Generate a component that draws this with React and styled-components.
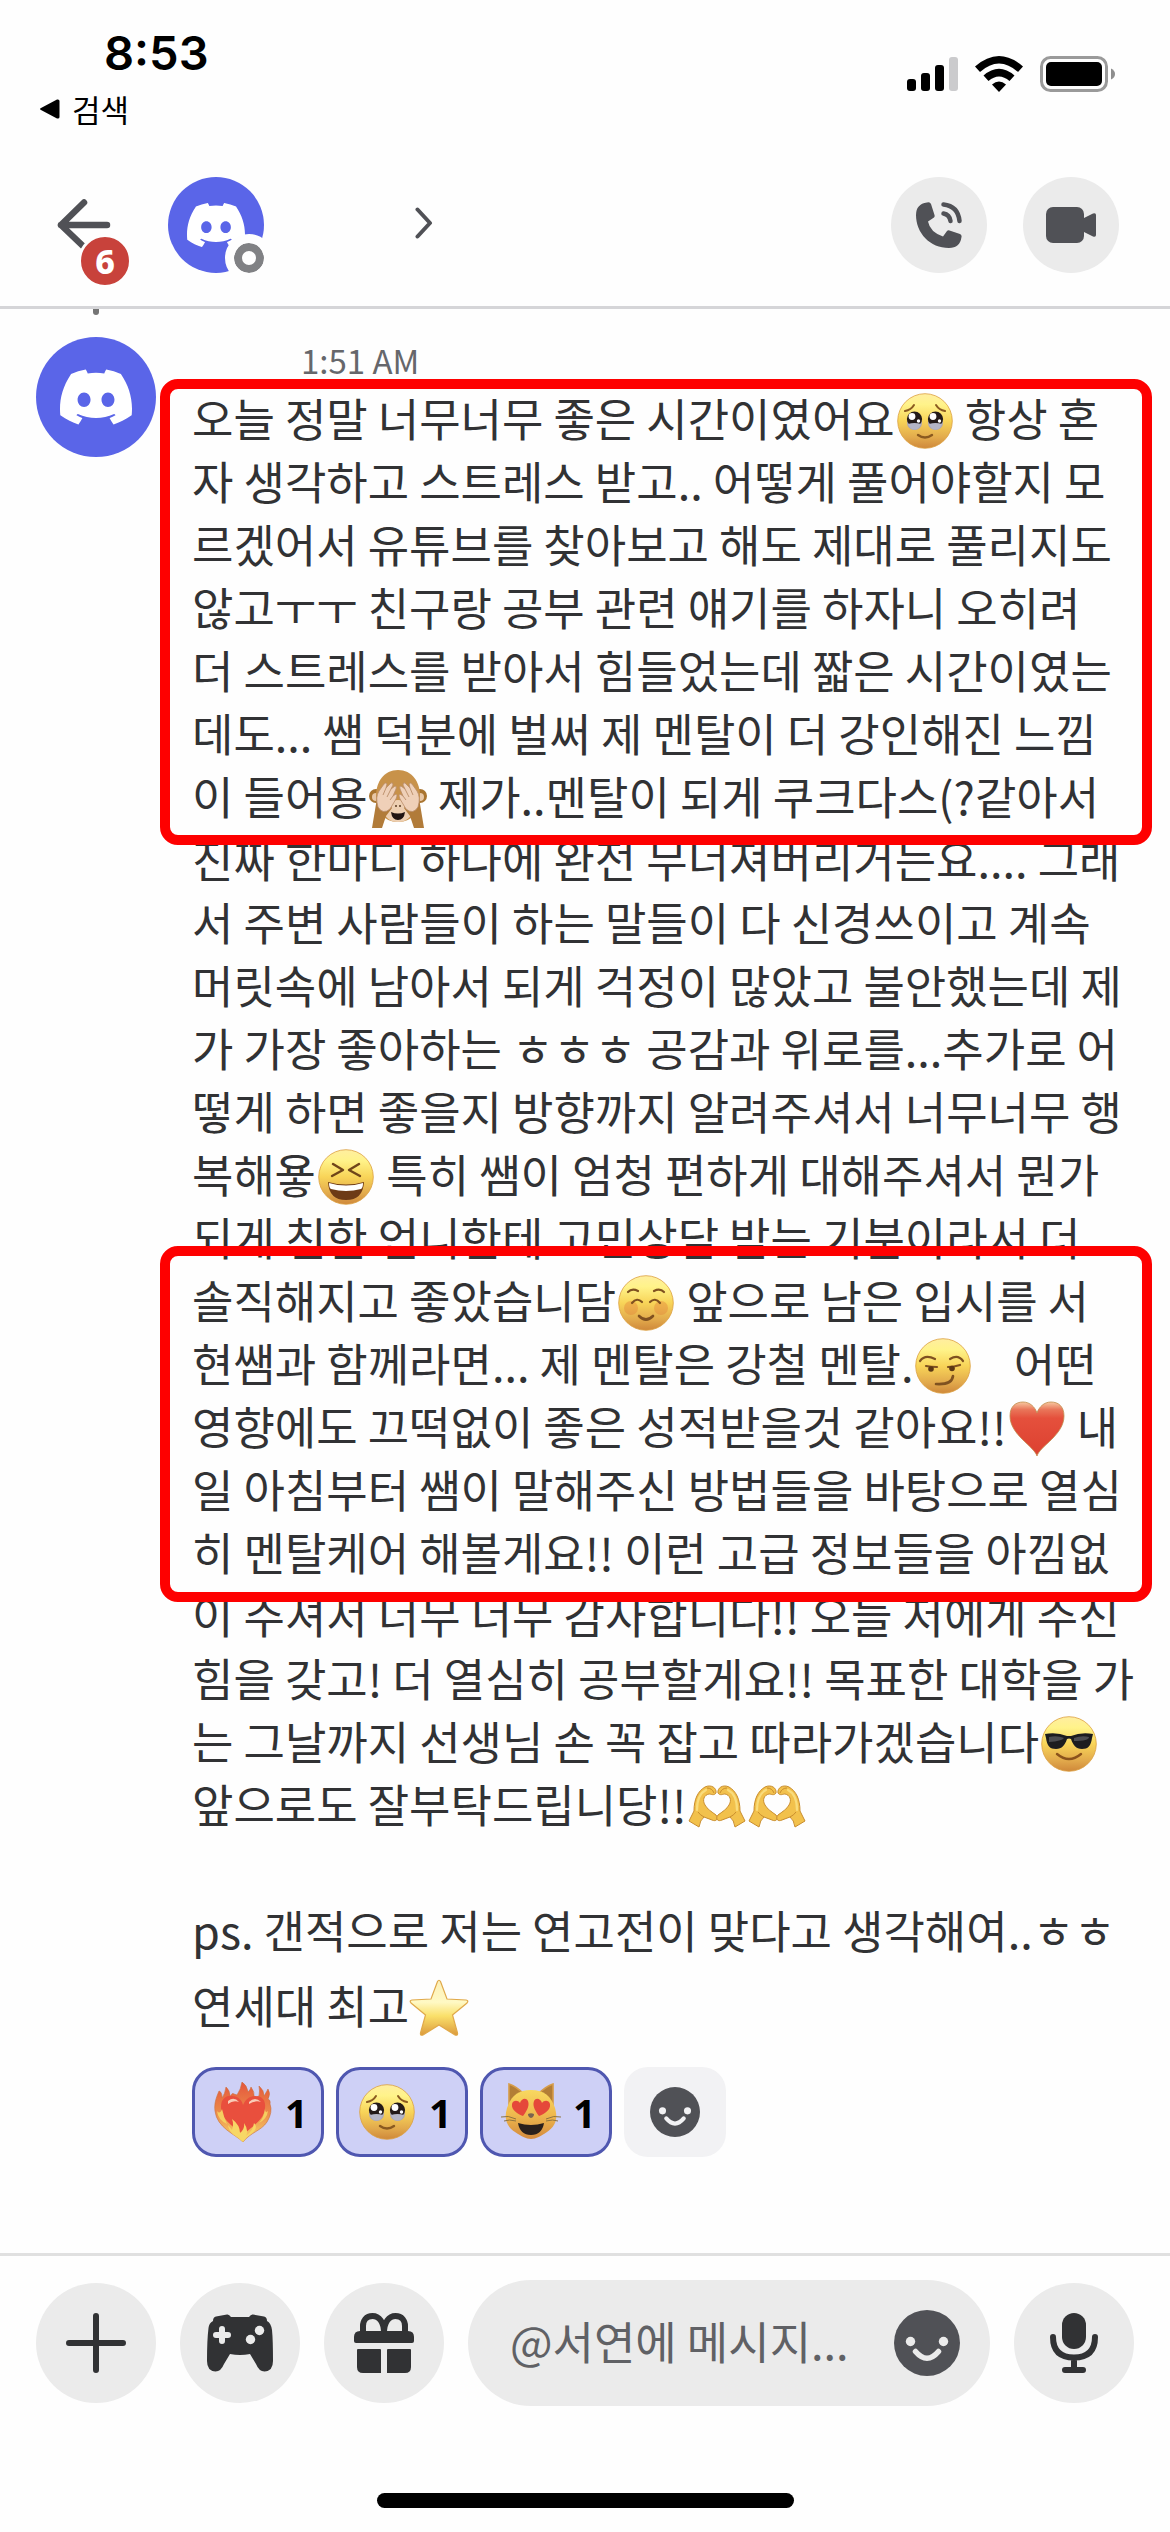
import React, { useState } from 'react'
import styled, { createGlobalStyle } from 'styled-components'
import { SiDiscord } from 'react-icons/si'

const message = [
  '오늘 정말 너무너무 좋은 시간이였어요🥹 항상 혼',
  '자 생각하고 스트레스 받고.. 어떻게 풀어야할지 모',
  '르겠어서 유튜브를 찾아보고 해도 제대로 풀리지도',
  '않고ㅜㅜ 친구랑 공부 관련 얘기를 하자니 오히려',
  '더 스트레스를 받아서 힘들었는데 짧은 시간이였는',
  '데도... 쌤 덕분에 벌써 제 멘탈이 더 강인해진 느낌',
  '이 들어용🙈 제가..멘탈이 되게 쿠크다스(?같아서',
  '진짜 한마디 하나에 완전 무너져버리거든요.... 그래',
  '서 주변 사람들이 하는 말들이 다 신경쓰이고 계속',
  '머릿속에 남아서 되게 걱정이 많았고 불안했는데 제',
  '가 가장 좋아하는 ㅎㅎㅎ 공감과 위로를...추가로 어',
  '떻게 하면 좋을지 방향까지 알려주셔서 너무너무 행',
  '복해욯😆 특히 쌤이 엄청 편하게 대해주셔서 뭔가',
  '되게 친한 언니한테 고민상담 받는 기분이라서 더',
  '솔직해지고 좋았습니담😊 앞으로 남은 입시를 서',
  '현쌤과 함께라면... 제 멘탈은 강철 멘탈.😏\u00a0\u00a0\u00a0 어떤',
  '영향에도 끄떡없이 좋은 성적받을것 같아요!!❤ 내',
  '일 아침부터 쌤이 말해주신 방법들을 바탕으로 열심',
  '히 멘탈케어 해볼게요!! 이런 고급 정보들을 아낌없',
  '이 주셔서 너무 너무 감사합니다!! 오늘 저에게 주신',
  '힘을 갖고! 더 열심히 공부할게요!! 목표한 대학을 가',
  '는 그날까지 선생님 손 꼭 잡고 따라가겠습니다😎',
  '앞으로도 잘부탁드립니당!!🫶🫶',
  '',
  'ps. 갠적으로 저는 연고전이 맞다고 생각해여..ㅎㅎ',
]

const lastLine = '연세대 최고⭐'

const highlights = [
  { top: -7, height: 466 },
  { top: 860, height: 356 },
]

const heartPath =
  'M30 57C27 47 3 36 3 17C3 7 9 3 16 3C23 3 28 8 30 14C32 8 37 3 44 3C51 3 57 7 57 17C57 36 33 47 30 57Z'

function Gradients() {
  return (
    <HiddenSvg aria-hidden="true">
      <defs>
        <linearGradient id="face" x1="0" y1="0" x2="0" y2="1">
          <stop offset="0" stopColor="#ffeea0" />
          <stop offset="0.2" stopColor="#fff38a" />
          <stop offset="0.5" stopColor="#f8d458" />
          <stop offset="0.8" stopColor="#e2aa4c" />
          <stop offset="1" stopColor="#cf883a" />
        </linearGradient>
        <linearGradient id="heart" x1="0" y1="0" x2="0" y2="1">
          <stop offset="0" stopColor="#f7c9a0" />
          <stop offset="0.14" stopColor="#e9765a" />
          <stop offset="0.3" stopColor="#e5503c" />
          <stop offset="1" stopColor="#dc4030" />
        </linearGradient>
        <linearGradient id="star" x1="0" y1="0" x2="0" y2="1">
          <stop offset="0" stopColor="#fdf0b8" />
          <stop offset="0.4" stopColor="#fff9c4" />
          <stop offset="0.65" stopColor="#fae06a" />
          <stop offset="1" stopColor="#dc9a3c" />
        </linearGradient>
        <linearGradient id="fire" x1="0" y1="0" x2="0" y2="1">
          <stop offset="0" stopColor="#e5553c" />
          <stop offset="0.5" stopColor="#ec8a4a" />
          <stop offset="1" stopColor="#f8d868" />
        </linearGradient>
        <linearGradient id="cat" x1="0" y1="0" x2="0" y2="1">
          <stop offset="0" stopColor="#f8d860" />
          <stop offset="0.5" stopColor="#efb94e" />
          <stop offset="1" stopColor="#d48a3e" />
        </linearGradient>
      </defs>
    </HiddenSvg>
  )
}

function Face({ children }) {
  return (
    <>
      <circle cx="30" cy="30" r="27.3" fill="url(#face)" stroke="#dca040" strokeWidth="0.8" />
      {children}
    </>
  )
}

const drawings = {
  '🥹': {
    label: '울음을 참는 얼굴',
    art: (
      <Face>
        <g fill="none" stroke="#8a5a20" strokeWidth="2" strokeLinecap="round">
          <path d="M10 20Q16 19 19 14" />
          <path d="M50 20Q44 19 41 14" />
          <path d="M23 44Q30 49 37 44" strokeWidth="2.4" />
        </g>
        <ellipse cx="19.5" cy="32" rx="7.5" ry="7" fill="#a9a6b8" />
        <ellipse cx="40.5" cy="32" rx="7.5" ry="7" fill="#a9a6b8" />
        <circle cx="19.5" cy="28" r="7.6" fill="#231a18" />
        <circle cx="40.5" cy="28" r="7.6" fill="#231a18" />
        <path d="M13 33Q19.500 31 26 33Q24 38.500 19.500 38.500Q15 38.500 13 33Z" fill="#b4b5c6" />
        <path d="M34 33Q40.500 31 47 33Q45 38.500 40.500 38.500Q36 38.500 34 33Z" fill="#b4b5c6" />
        <circle cx="17" cy="25.5" r="3.4" fill="#fff" />
        <circle cx="38" cy="25.5" r="3.4" fill="#fff" />
        <circle cx="23.5" cy="30" r="1.7" fill="#fff" />
        <circle cx="44.5" cy="30" r="1.7" fill="#fff" />
      </Face>
    ),
  },
  '🙈': {
    label: '눈을 가린 원숭이',
    art: (
      <>
        <circle cx="8" cy="27" r="7" fill="#a9742f" />
        <circle cx="52" cy="27" r="7" fill="#a9742f" />
        <circle cx="8" cy="28" r="4" fill="#e8c7a6" />
        <circle cx="52" cy="28" r="4" fill="#e8c7a6" />
        <path d="M30 1C44 1 52 13 52 27C52 41 45 53 30 53C15 53 8 41 8 27C8 13 16 1 30 1Z" fill="#c8924a" />
        <ellipse cx="30" cy="42" rx="14" ry="11" fill="#edcfb2" />
        <path d="M23 43Q30 46 37 43Q36 51 30 51Q24 51 23 43Z" fill="#201412" />
        <circle cx="28" cy="37" r="1" fill="#5a3a20" />
        <circle cx="32" cy="37" r="1" fill="#5a3a20" />
        <path d="M9 29L4 59H14L18 47L24 39L14 26Z" fill="#b17b39" />
        <path d="M51 29L56 59H46L42 47L36 39L46 26Z" fill="#b17b39" />
        <path
          d="M10 38Q7 28 11 22L16 15Q18 13 19 15L18 19L23 14Q25 13 25 16L23 20L27 17Q29 17 28 20L25 27L28 25Q30 26 28 30L22 40Q15 46 10 38Z"
          fill="#efd0b8"
          stroke="#b98c68"
          strokeWidth="0.8"
        />
        <path
          d="M50 38Q53 28 49 22L44 15Q42 13 41 15L42 19L37 14Q35 13 35 16L37 20L33 17Q31 17 32 20L35 27L32 25Q30 26 32 30L38 40Q45 46 50 38Z"
          fill="#efd0b8"
          stroke="#b98c68"
          strokeWidth="0.8"
        />
        <g stroke="#b98c68" strokeWidth="0.9" fill="none">
          <path d="M18 19L15 26M23 20L19 28M25 27L22 31" />
          <path d="M42 19L45 26M37 20L41 28M35 27L38 31" />
        </g>
      </>
    ),
  },
  '😆': {
    label: '눈을 감고 활짝 웃는 얼굴',
    art: (
      <Face>
        <g fill="none" stroke="#6f4519" strokeWidth="2.4" strokeLinecap="round" strokeLinejoin="round">
          <path d="M17 17L27 23L16 29" />
          <path d="M43 17L33 23L44 29" />
        </g>
        <path d="M12 35Q30 40 48 35Q47 53 30 53Q13 53 12 35Z" fill="#6d3a16" />
        <path d="M13 36Q30 41 47 36Q47 41 45 42Q30 46 15 42Q13 41 13 36Z" fill="#fff" />
      </Face>
    ),
  },
  '😊': {
    label: '미소 짓는 얼굴',
    art: (
      <Face>
        <circle cx="15" cy="35" r="7" fill="#e0803a" opacity="0.4" />
        <circle cx="45" cy="35" r="7" fill="#e0803a" opacity="0.4" />
        <g fill="none" stroke="#7f5120" strokeWidth="2.2" strokeLinecap="round">
          <path d="M12 19Q16 15 22 18" />
          <path d="M48 19Q44 15 38 18" />
          <path d="M16 30Q21 24 26 29" />
          <path d="M44 30Q39 24 34 29" />
          <path d="M23 43Q30 50 37 43" strokeWidth="2.6" />
        </g>
      </Face>
    ),
  },
  '😏': {
    label: '능글맞게 웃는 얼굴',
    art: (
      <Face>
        <g fill="none" stroke="#7f5120" strokeWidth="2.2" strokeLinecap="round">
          <path d="M7 25Q12 18 22 23" />
          <path d="M50 25Q45 18 37 23" />
          <path d="M13 30Q18 31 24 31" />
          <path d="M35 31Q41 31 47 29" />
          <path d="M23 48Q39 49 40 40" strokeWidth="2.6" />
        </g>
        <circle cx="18" cy="33" r="2.8" fill="#5a3714" />
        <circle cx="39" cy="32.5" r="2.8" fill="#5a3714" />
      </Face>
    ),
  },
  '❤': {
    label: '빨간 하트',
    art: <path d={heartPath} fill="url(#heart)" stroke="#c08a4a" strokeWidth="0.8" />,
  },
  '😎': {
    label: '선글라스를 낀 얼굴',
    art: (
      <Face>
        <path
          d="M6 20Q18 18 28 22H32Q42 18 54 20L53 24C52 32 49 35 43 35C37 35 34 31 32 25Q30 24 28 25C26 31 23 35 17 35C11 35 8 32 7 24Z"
          fill="#1c1c1f"
        />
        <path d="M10 23Q18 21 25 24Q23 27 10 28Z" fill="#4b4c50" />
        <path d="M35 24Q43 21 50 23Q50 27 35 27Z" fill="#4b4c50" />
        <path d="M18 40Q30 50 42 40" fill="none" stroke="#8a521c" strokeWidth="2.4" strokeLinecap="round" />
      </Face>
    ),
  },
  '🫶': {
    label: '하트 모양 손',
    art: (
      <>
        <g fill="#f2c14c" stroke="#c98d2e" strokeWidth="1" strokeLinejoin="round">
          <path d="M12 50L2 44L7 34C7 22 11 14 18 10C24 7 30 11 29 16C27 19 24 17 22 17C17 18 15 23 18 28C20 32 25 35 29 38C32 42 29 45 25 43L17 40Q13 43 12 50Z" />
          <path d="M48 50L58 44L53 34C53 22 49 14 42 10C36 7 30 11 31 16C33 19 36 17 38 17C43 18 45 23 42 28C40 32 35 35 31 38C28 42 31 45 35 43L43 40Q47 43 48 50Z" />
        </g>
        <g fill="none" stroke="#f9dc7c" strokeWidth="2.2" strokeLinecap="round">
          <path d="M10 33C10 24 13 16 19 13" />
          <path d="M50 33C50 24 47 16 41 13" />
        </g>
        <g fill="none" stroke="#c98d2e" strokeWidth="1">
          <path d="M20 11Q25 11 27 16M11 35Q13 38 17 40" />
          <path d="M40 11Q35 11 33 16M49 35Q47 38 43 40" />
        </g>
      </>
    ),
  },
  '⭐': {
    label: '별',
    art: (
      <path
        d="M28.5 3.5Q30 1 31.500 3.500L38 21L57 22Q60 22.500 58 25L43.500 37L48.500 55Q49 58 46 57L30 47L14 57Q11 58 11.500 55L16.500 37L2 25Q0 22.500 3 22L22 21Z"
        fill="url(#star)"
        stroke="#e0a94a"
        strokeWidth="1.2"
      />
    ),
  },
  '🔥': {
    label: '불타는 하트',
    art: (
      <>
        <path
          d="M30 60C22 52 4 46 2 29C1 22 3 16 6 9C9 10 9 14 9 16Q12 12 13 5Q17 8 17 15Q19 10 21 12L24 13Q28 7 29 0Q34 3 35 10Q38 7 38 5Q42 10 41 16L46 14Q47 9 46 4Q51 8 51 14Q54 9 55 7Q58 12 55 17Q58 18 57 22Q60 30 54 40C48 49 38 50 30 60Z"
          fill="url(#fire)"
          stroke="#c9713c"
          strokeWidth="0.6"
        />
        <path
          d="M30 54C26 47 8 40 8 25C8 17 13 13 19 14C25 14 29 18 30 23C32 18 36 14 42 14C49 14 53 18 52 26C51 40 35 46 30 54Z"
          fill="#e94f3d"
        />
        <path d="M15 19Q21 14 26 20Q20 18 15 22ZM36 20Q42 14 48 20Q42 18 36 22Z" fill="#f9cbb6" />
        <path
          d="M30 60C24 54 16 52 15 43L19 48Q21 42 19 37Q27 43 27 51Q32 47 31 41Q36 48 33 54Q40 49 41 41Q46 46 38 52Q33 55 30 60Z"
          fill="#f7d765"
        />
        <path d="M4 29Q7 33 9 27Q11 36 14 42Q5 38 4 29ZM55 29Q52 32 52 27Q51 35 46 41Q54 37 55 29Z" fill="#f5cf60" />
      </>
    ),
  },
  '😻': {
    label: '하트 눈 고양이',
    art: (
      <>
        <path d="M8 26L8 2Q15 4 24 13ZM52 26L52 2Q45 4 36 13Z" fill="#b27d36" stroke="#d69c48" strokeWidth="1.6" />
        <path
          d="M30 8C43 8 50 14 54 26C57 36 55 44 46 50C40 54 35 57 30 57C25 57 20 54 14 50C5 44 3 36 6 26C10 14 17 8 30 8Z"
          fill="url(#cat)"
        />
        <path d="M22 34C17 32 10 28 11 22C12 18 17 18 19 21C20 17 25 15 27 19C29 24 25 30 22 34Z" fill="#e5483a" />
        <path d="M38 34C43 32 50 28 49 22C48 18 43 18 41 21C40 17 35 15 33 19C31 24 35 30 38 34Z" fill="#e5483a" />
        <path d="M27 32Q30 30.500 33 32Q33 35 30 36Q27 35 27 32Z" fill="#7a6350" />
        <path d="M17 41Q30 45 43 41Q41 53 30 53Q19 53 17 41Z" fill="#2a201c" />
        <g stroke="#8f7440" strokeWidth="1" fill="none">
          <path d="M15 37Q7 33 0 35M15 39Q8 37 3 39" />
          <path d="M45 37Q53 33 60 35M45 39Q52 37 57 39" />
        </g>
      </>
    ),
  },
}

function Emoji({ char }) {
  const { label, art } = drawings[char]
  return (
    <EmojiSvg viewBox="0 0 60 60" role="img" aria-label={label}>
      {art}
    </EmojiSvg>
  )
}

// splits a line into plain strings and drawn emoji
function RichText({ text }) {
  return Array.from(text).reduce((parts, char, index) => {
    if (drawings[char]) {
      parts.push(<Emoji key={index} char={char} />)
    } else if (typeof parts[parts.length - 1] === 'string') {
      parts[parts.length - 1] += char
    } else {
      parts.push(char)
    }
    return parts
  }, [])
}

function SmileyIcon({ size, hole }) {
  return (
    <svg width={size} height={size} viewBox="0 0 66 66" aria-hidden="true">
      <circle cx="33" cy="33" r="33" fill="#505156" />
      <circle cx="16.5" cy="31.5" r="4.7" fill={hole} />
      <circle cx="49.5" cy="31.5" r="4.7" fill={hole} />
      <path d="M21.500 41.500Q33 55 44.500 41.500" fill="none" stroke={hole} strokeWidth="5.5" strokeLinecap="round" />
    </svg>
  )
}

function StatusBar() {
  return (
    <StatusRow>
      <div>
        <Clock>8:53</Clock>
        <BackToSearch href="#search">
          <svg width="21" height="22" viewBox="0 0 21 22" aria-hidden="true">
            <path d="M18 1.500L2 10Q0 11 2 12L18 20.500Q20.500 21 20.500 19V3Q20.500 1 18 1.500Z" />
          </svg>
          검색
        </BackToSearch>
      </div>
      <StatusIcons>
        <svg width="51" height="34" viewBox="0 0 51 34" aria-hidden="true">
          <rect y="22" width="9" height="12" rx="3" />
          <rect x="14" y="16" width="9" height="18" rx="3" />
          <rect x="28" y="8" width="9" height="26" rx="3" />
          <rect x="42" width="9" height="34" rx="3" fill="#cbcbcd" />
        </svg>
        <svg width="48" height="36" viewBox="0 0 48 36" aria-hidden="true">
          <path d="M0 10.500Q24-10.500 48 10.500L43 16Q24-1 5 16Z" />
          <path d="M8.500 19.500Q24 6 39.500 19.500L34.500 25Q24 16 13.500 25Z" />
          <path d="M17 28.500Q24 22.500 31 28.500L24 36Z" />
        </svg>
        <svg width="76" height="36" viewBox="0 0 76 36" aria-hidden="true">
          <rect x="1.5" y="1.5" width="65" height="33" rx="9" fill="none" stroke="#9a9a9a" strokeWidth="3" />
          <rect x="6" y="6" width="56" height="24" rx="5" />
          <path d="M71 12.500Q75 14.500 75 18T71 23.500Z" fill="#8e8e8e" />
        </svg>
      </StatusIcons>
    </StatusRow>
  )
}

function Header() {
  return (
    <HeaderBar>
      <BackButton aria-label="뒤로">
        <svg width="54" height="52" viewBox="0 0 54 52" aria-hidden="true">
          <path
            d="M27 3.500L4 26L27 48M4 26H50"
            fill="none"
            stroke="#505156"
            strokeWidth="6.5"
            strokeLinecap="round"
            strokeLinejoin="round"
          />
        </svg>
        <Badge>6</Badge>
      </BackButton>
      <Avatar $size={96}>
        <SiDiscord size={58} />
        <Presence />
      </Avatar>
      <ProfileButton aria-label="프로필">
        <svg width="18" height="32" viewBox="0 0 18 32" aria-hidden="true">
          <path
            d="M2.500 2.500L15 16L2.500 29.500"
            fill="none"
            stroke="#505156"
            strokeWidth="4"
            strokeLinecap="round"
            strokeLinejoin="round"
          />
        </svg>
      </ProfileButton>
      <CallButtons>
        <RoundButton $size={96} aria-label="음성 통화">
          <svg width="46" height="46" viewBox="0 0 46 46" aria-hidden="true">
            <path
              d="M11 0.500Q14-0.500 15 2L18.500 13Q19 14.500 18 15.500L12 19.500Q14 30 27 34.500L31 29Q32 28 33.500 28.500L44 32Q46 33 45.500 35Q44 46 33 46C14 46 0 31 0 13Q0 2 11 0.500Z"
              fill="#505156"
            />
            <path
              d="M27.500 2.500Q42 4 43.500 19M27.500 11.500Q33.500 12.500 34.500 19"
              fill="none"
              stroke="#505156"
              strokeWidth="4.5"
              strokeLinecap="round"
            />
          </svg>
        </RoundButton>
        <RoundButton $size={96} aria-label="영상 통화">
          <svg width="50" height="36" viewBox="0 0 50 36" aria-hidden="true" fill="#505156">
            <rect width="38" height="36" rx="7" />
            <path d="M36 12L47 6.500Q50 5.500 50 8V28Q50 30.500 47 29.500L36 24Z" />
          </svg>
        </RoundButton>
      </CallButtons>
    </HeaderBar>
  )
}

function Reactions() {
  const [active, setActive] = useState({ '🔥': true, '🥹': true, '😻': true })
  const toggle = (char) => setActive({ ...active, [char]: !active[char] })
  return (
    <ReactionRow>
      {Object.keys(active).map((char) => (
        <Reaction key={char} $active={active[char]} aria-pressed={active[char]} onClick={() => toggle(char)}>
          <Emoji char={char} />
          <span>{active[char] ? 1 : 0}</span>
        </Reaction>
      ))}
      <AddReaction aria-label="반응 추가하기">
        <SmileyIcon size={50} hole="#f2f2f4" />
      </AddReaction>
    </ReactionRow>
  )
}

function Composer() {
  const [draft, setDraft] = useState('')
  return (
    <ComposerBar>
      <RoundButton $size={120} aria-label="첨부">
        <svg width="60" height="60" viewBox="0 0 60 60" aria-hidden="true">
          <path d="M30 3V57M3 30H57" stroke="#313234" strokeWidth="6" strokeLinecap="round" />
        </svg>
      </RoundButton>
      <RoundButton $size={120} aria-label="게임">
        <svg width="66" height="58" viewBox="0 0 66 58" aria-hidden="true">
          <path
            d="M9 2.500L20 0.500Q22 0 24 3H42Q44 0 46 0.500L57 2.500Q60 3 60 7Q64 9 65 16Q66 26 66 47Q66 57 57.500 57.500Q52 57.500 49 50L43 40Q33 42 23 40L17 50Q14 57.500 8.500 57.500Q0 57 0 47Q0 26 1.500 14Q2 9 6 7Q6 3 9 2.500Z"
            fill="#313234"
          />
          <path d="M15 15V27M9 21H21" stroke="#ebebeb" strokeWidth="6" strokeLinecap="round" />
          <circle cx="52.5" cy="16.5" r="4.7" fill="#ebebeb" />
          <circle cx="43.5" cy="25.5" r="4.7" fill="#ebebeb" />
        </svg>
      </RoundButton>
      <RoundButton $size={120} aria-label="선물">
        <svg width="60" height="60" viewBox="0 0 60 60" aria-hidden="true" fill="#313234">
          <path
            d="M30 20C30 9 25 3 18.500 3C12 3 9 8 9 13V20M30 20C30 9 35 3 41.500 3C48 3 51 8 51 13V20"
            fill="none"
            stroke="#313234"
            strokeWidth="6"
          />
          <path d="M6 18H54Q60 18 60 24V28Q60 30 58 30H2Q0 30 0 28V24Q0 18 6 18Z" />
          <path d="M4 36H26Q27 36 27 37V60H9Q3 60 3 54V37Q3 36 4 36Z" />
          <path d="M34 36H56Q57 36 57 37V54Q57 60 51 60H33V37Q33 36 34 36Z" />
        </svg>
      </RoundButton>
      <InputPill>
        <MessageInput
          aria-label="메시지 보내기"
          placeholder="@서연에 메시지..."
          value={draft}
          onChange={(e) => setDraft(e.target.value)}
        />
        <EmojiButton aria-label="이모지">
          <SmileyIcon size={66} hole="#ebebeb" />
        </EmojiButton>
      </InputPill>
      <RoundButton $size={120} aria-label="음성 메시지">
        <svg width="48" height="60" viewBox="0 0 48 60" aria-hidden="true">
          <rect x="12" width="24" height="36" rx="12" fill="#313234" />
          <path
            d="M3 24Q3 44.500 24 44.500T45 24M24 45V57M15 57H33"
            fill="none"
            stroke="#313234"
            strokeWidth="6"
            strokeLinecap="round"
          />
        </svg>
      </RoundButton>
    </ComposerBar>
  )
}

function App() {
  return (
    <Screen>
      <GlobalStyle />
      <Gradients />
      <StatusBar />
      <Header />
      <Message>
        <AvatarColumn>
          <ReplySpine />
          <Avatar $size={120}>
            <SiDiscord size={72} />
          </Avatar>
        </AvatarColumn>
        <MessageBody>
          <Timestamp>1:51 AM</Timestamp>
          <MessageText>
            {message.map((line, index) => (
              <Line key={index}>
                <RichText text={line} />
              </Line>
            ))}
            {highlights.map(({ top, height }) => (
              <Highlight key={top} $top={top} $height={height} />
            ))}
          </MessageText>
          <Postscript>
            <RichText text={lastLine} />
          </Postscript>
          <Reactions />
        </MessageBody>
      </Message>
      <Composer />
      <HomeIndicator />
    </Screen>
  )
}

export default App

const GlobalStyle = createGlobalStyle`
  * {
    box-sizing: border-box;
  }
  body {
    margin: 0;
    background: #fefefe;
    color: #313234;
    font-family: "Noto Sans CJK KR", "Noto Sans", sans-serif;
  }
  button {
    padding: 0;
    border: none;
    background: none;
    color: inherit;
    font-family: inherit;
    cursor: pointer;
  }
  svg {
    flex-shrink: 0;
  }
`

const Screen = styled.div`
  min-height: 100vh;
  display: flex;
  flex-direction: column;
  overflow-x: hidden;
`

const HiddenSvg = styled.svg`
  position: absolute;
  width: 0;
  height: 0;
`

const StatusRow = styled.div`
  display: flex;
  justify-content: space-between;
  padding: 24px 54px 20px 39px;
  color: #000;
`

const Clock = styled.div`
  padding-left: 65px;
  font-family: Inter, sans-serif;
  font-size: 47px;
  font-weight: 600;
  line-height: 58px;
`

const BackToSearch = styled.a`
  display: flex;
  align-items: center;
  gap: 12px;
  margin-top: 6px;
  color: #000;
  font-size: 31px;
  line-height: 42px;
  text-decoration: none;
`

const StatusIcons = styled.div`
  display: flex;
  align-items: center;
  gap: 17px;
  height: 100px;
`

const HeaderBar = styled.header`
  display: flex;
  align-items: center;
  padding: 27px 51px 33px 57px;
  border-bottom: 3px solid #d5d5d8;
`

const BackButton = styled.button`
  position: relative;
  display: flex;
  margin-right: 57px;
`

const Badge = styled.span`
  position: absolute;
  top: 35px;
  left: 21px;
  width: 54px;
  height: 54px;
  border: 3px solid #fefefe;
  border-radius: 50%;
  background: #c8423b;
  color: #fff;
  font-family: "Noto Sans", sans-serif;
  font-size: 34px;
  font-weight: 800;
  line-height: 48px;
  text-align: center;
`

const Avatar = styled.div`
  position: relative;
  display: flex;
  align-items: center;
  justify-content: center;
  width: ${({ $size }) => $size}px;
  height: ${({ $size }) => $size}px;
  flex-shrink: 0;
  border-radius: 50%;
  background: #5a65e8;
  color: #fff;
`

const Presence = styled.span`
  position: absolute;
  right: -9px;
  bottom: -9px;
  width: 48px;
  height: 48px;
  border: 9px solid #fefefe;
  border-radius: 50%;
  background: #fefefe;
  box-shadow: inset 0 0 0 8px #808184;
`

const ProfileButton = styled.button`
  display: flex;
  flex: 1;
  padding: 0 0 5px 151px;
`

const CallButtons = styled.div`
  display: flex;
  gap: 36px;
`

const RoundButton = styled.button`
  display: flex;
  align-items: center;
  justify-content: center;
  width: ${({ $size }) => $size}px;
  height: ${({ $size }) => $size}px;
  flex-shrink: 0;
  border-radius: 50%;
  background: #ebebeb;
`

const Message = styled.main`
  display: flex;
  flex: 1;
  gap: 36px;
  padding: 0 24px 24px 36px;
`

const AvatarColumn = styled.div`
  display: flex;
  flex-direction: column;
  align-items: center;
  gap: 22px;
`

const ReplySpine = styled.span`
  width: 6px;
  height: 6px;
  border-radius: 0 0 3px 3px;
  background: #757575;
`

const MessageBody = styled.div`
  flex: 1;
  min-width: 0;
`

const Timestamp = styled.div`
  padding: 27px 0 2px 109px;
  color: #66676b;
  font-size: 33px;
  line-height: 48px;
`

const MessageText = styled.p`
  position: relative;
  margin: 0;
  font-size: 45px;
  line-height: 63px;
  word-break: break-all;
`

const Line = styled.span`
  display: block;
  min-height: 63px;
`

const Postscript = styled(MessageText)`
  margin-top: 12px;
`

const EmojiSvg = styled.svg`
  display: inline-block;
  width: 60px;
  height: 60px;
  margin: -6px 0;
  vertical-align: -8px;
`

const Highlight = styled.span`
  position: absolute;
  top: ${({ $top }) => $top}px;
  left: -32px;
  right: -6px;
  height: ${({ $height }) => $height}px;
  border: 10px solid #fe0000;
  border-radius: 18px;
  pointer-events: none;
`

const ReactionRow = styled.div`
  display: flex;
  gap: 12px;
  margin-top: 31px;
`

const Reaction = styled.button`
  display: flex;
  align-items: center;
  gap: 12px;
  width: 132px;
  height: 90px;
  padding-left: 18px;
  border: 3px solid ${({ $active }) => ($active ? '#4f57b0' : '#f2f2f4')};
  border-radius: 24px;
  background: ${({ $active }) => ($active ? '#ced0f6' : '#f2f2f4')};
  color: #000;
  font-family: "Noto Sans", sans-serif;
  font-size: 40px;
  font-weight: 700;
`

const AddReaction = styled.button`
  display: flex;
  align-items: center;
  justify-content: center;
  width: 102px;
  height: 90px;
  border-radius: 24px;
  background: #f2f2f4;
`

const ComposerBar = styled.footer`
  display: flex;
  align-items: center;
  gap: 24px;
  padding: 24px 36px 0;
  border-top: 3px solid #e0e0e0;
`

const InputPill = styled.div`
  display: flex;
  flex: 1;
  align-items: center;
  min-width: 0;
  height: 126px;
  padding: 0 30px 0 42px;
  border-radius: 63px;
  background: #ebebeb;
`

const MessageInput = styled.input`
  flex: 1;
  min-width: 0;
  height: 72px;
  padding: 0 0 5px;
  border: none;
  outline: none;
  background: transparent;
  color: #313234;
  font-family: inherit;
  font-size: 45px;
  &::placeholder {
    color: #606165;
    opacity: 1;
  }
`

const EmojiButton = styled.button`
  display: flex;
`

const HomeIndicator = styled.div`
  width: 417px;
  height: 15px;
  margin: 87px auto 24px;
  border-radius: 8px;
  background: #000;
`
